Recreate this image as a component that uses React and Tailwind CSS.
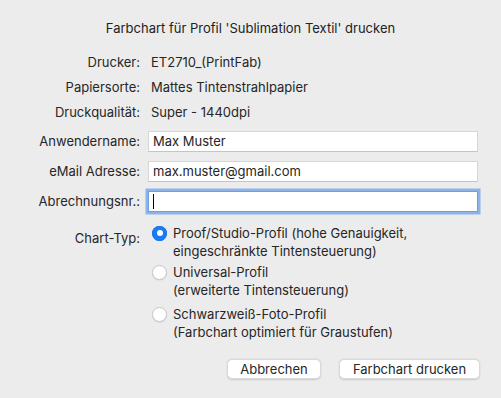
import React from 'react';

const font = { fontFamily: 'Inter, "Noto Sans", sans-serif' };

const InfoRow = ({ label, value }) => (
  <div className="flex h-[25px] items-center">
    <div className="w-[140px] text-right">{label}</div>
    <div className="pl-[11px]">{value}</div>
  </div>
);

const InputRow = ({ label, value, focused, className = '' }) => (
  <div className={`flex items-center ${className}`}>
    <div className="w-[140px] text-right">{label}</div>
    <div
      className={`ml-[8px] flex h-[21px] w-[330px] items-center bg-white pl-[4px] ${
        focused
          ? 'border border-[#6f9ee0] ring-[2.5px] ring-[#8db4ea]'
          : 'border border-[#d6d6d6] border-b-[#c4c4c4]'
      }`}
    >
      {focused ? <span className="h-[15px] w-px bg-black" /> : value}
    </div>
  </div>
);

const Radio = ({ checked, lines, className = '' }) => (
  <div className={`flex items-start ${className}`}>
    <div className="flex h-[18px] items-center">
      {checked ? (
        <span className="flex h-[15px] w-[15px] items-center justify-center rounded-full bg-[#1a7cf5] shadow-[inset_0_0_0_0.5px_#0f6ae0]">
          <span className="h-[6px] w-[6px] rounded-full bg-white" />
        </span>
      ) : (
        <span className="h-[15px] w-[15px] rounded-full border border-[#c8c8c8] bg-white shadow-[0_0.5px_1px_rgba(0,0,0,0.12)]" />
      )}
    </div>
    <div className="ml-[6px] leading-[18px]">
      {lines.map((l) => (
        <div key={l}>{l}</div>
      ))}
    </div>
  </div>
);

export default function App() {
  return (
    <div className="h-[398px] w-[501px] overflow-hidden bg-[#ececec] text-[13px] text-[#262626]" style={font}>
      <div className="mt-[19px] h-[18px] text-center leading-[18px] text-[#222]">
        Farbchart für Profil 'Sublimation Textil' drucken
      </div>

      <div className="mt-[13px]">
        <InfoRow label="Drucker:" value="ET2710_(PrintFab)" />
        <InfoRow label="Papiersorte:" value="Mattes Tintenstrahlpapier" />
        <InfoRow label="Druckqualität:" value="Super - 1440dpi" />
      </div>

      <InputRow className="mt-[6px]" label="Anwendername:" value="Max Muster" />
      <InputRow className="mt-[9px]" label="eMail Adresse:" value="max.muster@gmail.com" />
      <InputRow className="mt-[9px]" label="Abrechnungsnr.:" focused />

      <div className="mt-[12px] flex">
        <div className="mt-[5px] w-[140px] text-right leading-[18px]">Chart-Typ:</div>
        <div className="ml-[12px]">
          <Radio checked lines={['Proof/Studio-Profil (hohe Genauigkeit,', 'eingeschränkte Tintensteuerung)']} />
          <Radio className="mt-[3px]" lines={['Universal-Profil', '(erweiterte Tintensteuerung)']} />
          <Radio className="mt-[6px]" lines={['Schwarzweiß-Foto-Profil', '(Farbchart optimiert für Graustufen)']} />
        </div>
      </div>

      <div className="mt-[18px] flex justify-end gap-[18px] pr-[21px]">
        <button className="h-[20px] w-[94px] rounded-[5px] border border-[#d9d9d9] bg-white text-[13px] leading-none text-[#262626] shadow-[0_0.5px_1.5px_rgba(0,0,0,0.15)]">
          Abbrechen
        </button>
        <button className="h-[20px] w-[141px] rounded-[5px] border border-[#d9d9d9] bg-white text-[13px] leading-none text-[#262626] shadow-[0_0.5px_1.5px_rgba(0,0,0,0.15)]">
          Farbchart drucken
        </button>
      </div>
    </div>
  );
}
